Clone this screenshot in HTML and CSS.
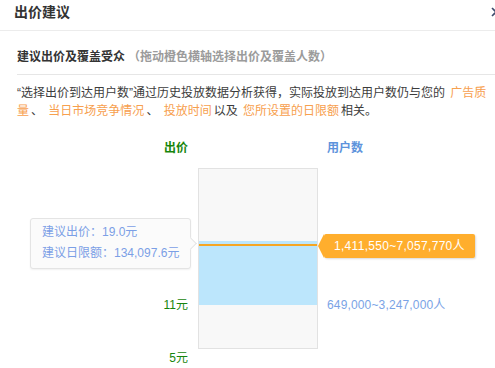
FILE: index.html
```html
<!DOCTYPE html>
<html lang="zh-CN">
<head>
    <meta charset="UTF-8">
    <meta name="viewport" content="width=device-width, initial-scale=1.0">
    <title>出价建议</title>
    <link rel="stylesheet" href="styles.css">
</head>
<body>
    <div class="dlgHead">
        <span class="dlgTitle">出价建议</span>
        <svg class="dlgClose" width="10" height="10" viewBox="0 0 10 10">
            <path d="M1 1 L9 9 M9 1 L1 9" stroke="#3e4b6c" stroke-width="1.6" fill="none"/>
        </svg>
    </div>

    <div class="dlgBody">
        <div class="secTitle">建议出价及覆盖受众<span class="secHint">（拖动橙色横轴选择出价及覆盖人数）</span></div>

        <p class="note">“选择出价到达用户数”通过历史投放数据分析获得，实际投放到达用户数仍与您的 <em>广告质量</em>、 <em>当日市场竞争情况</em>、 <em>投放时间</em>以及 <em>您所设置的日限额</em>相关。</p>

        <!--bid / audience chart-->
        <div class="chart">
            <div class="colHead bidHead">出价</div>
            <div class="colHead userHead">用户数</div>

            <div class="axis bidAxis">
                <div class="tip">
                    <div>建议出价：19.0元</div>
                    <div>建议日限额：134,097.6元</div>
                </div>
                <span class="mark" style="top:128px">11元</span>
                <span class="mark" style="top:181px">5元</span>
            </div>

            <div class="bar">
                <div class="range" style="top:72px;height:64px"></div>
                <div class="handle" style="top:75px"></div>
            </div>

            <div class="axis userAxis">
                <div class="badge">1,411,550~7,057,770人</div>
                <span class="mark" style="top:128px">649,000~3,247,000人</span>
            </div>
        </div>
    </div>
</body>
</html>
```

FILE: styles.css
```css
*{
    box-sizing: border-box;
}

body{
    margin: 0;
    background: #fff;
    font-family: "Liberation Sans", "Noto Sans CJK SC", sans-serif;
    font-size: 12px;
    color: #444;
}

.dlgHead{
    display: flex;
    justify-content: space-between;
    align-items: flex-start;
    height: 31px;
    padding: 3px 0 0 14px;
    overflow: hidden;
    border-bottom: 1px solid #ececec;
}

.dlgTitle{
    font-size: 14px;
    line-height: 18px;
    font-weight: bold;
    color: #333;
}

.dlgClose{
    flex: none;
    margin-top: 4px;
    margin-right: -6px;
}

.dlgBody{
    padding: 0 4px 0 17px;
}

.secTitle{
    margin: 17px -4px 0 0;
    padding-bottom: 8px;
    line-height: 18px;
    font-weight: bold;
    color: #333;
    border-bottom: 1px solid #e6e6e6;
}

.secHint{
    color: #9b9b9b;
    margin-left: 3px;
}

.note{
    margin: 9px 0 0 0;
    line-height: 18px;
    color: #3c3c3c;
}

.note em{
    font-style: normal;
    margin: 0 2px;
    color: #f7a04e;
}

/* chart */
.chart{
    display: grid;
    grid-template-columns: 171px 120px 1fr;
    grid-template-rows: 18px 181px;
    column-gap: 10px;
    row-gap: 11px;
    margin-top: 19px;
    padding-bottom: 19px;
}

.colHead{
    line-height: 18px;
    font-weight: bold;
}

.bidHead{
    grid-column: 1;
    text-align: right;
    color: #17850c;
}

.userHead{
    grid-column: 3;
    margin-left: -1px;
    color: #5d93dc;
}

.axis{
    position: relative;
}

.mark{
    position: absolute;
    line-height: 18px;
    white-space: nowrap;
}

.bidAxis .mark{
    right: 0;
    color: #17850c;
}

.userAxis .mark{
    left: -1px;
    letter-spacing: 0.15px;
    color: #7aa3e6;
}

.bar{
    position: relative;
    background: #f8f8f8;
    border: 1px solid #e2e2e2;
}

.range{
    position: absolute;
    left: 0;
    right: 0;
    background: #bce6fc;
}

.handle{
    position: absolute;
    left: 0;
    right: 0;
    height: 2px;
    background: #f6a623;
}

.tip{
    position: absolute;
    top: 50px;
    right: -3px;
    width: 161px;
    padding: 3px 0 4px 11px;
    line-height: 21px;
    color: #7b9fe6;
    background: #fbfbfb;
    border: 1px solid #e4e4e4;
    border-radius: 3px;
    box-shadow: 0 1px 2px rgba(0, 0, 0, 0.06);
}

.tip::after{
    content: "";
    position: absolute;
    top: 20px;
    right: -5px;
    width: 8px;
    height: 8px;
    background: #fbfbfb;
    border-top: 1px solid #e4e4e4;
    border-right: 1px solid #e4e4e4;
    transform: rotate(45deg);
}

.badge{
    position: absolute;
    top: 66px;
    left: -4px;
    height: 24px;
    padding: 0 10px;
    line-height: 24px;
    letter-spacing: 0.3px;
    color: #fff;
    white-space: nowrap;
    background: #ffae2d;
    border-radius: 2px;
    box-shadow: 1px 1px 2px rgba(0, 0, 0, 0.15);
}

.badge::before{
    content: "";
    position: absolute;
    top: 0;
    left: -6px;
    border-top: 12px solid transparent;
    border-bottom: 12px solid transparent;
    border-right: 6px solid #ffae2d;
}
```
